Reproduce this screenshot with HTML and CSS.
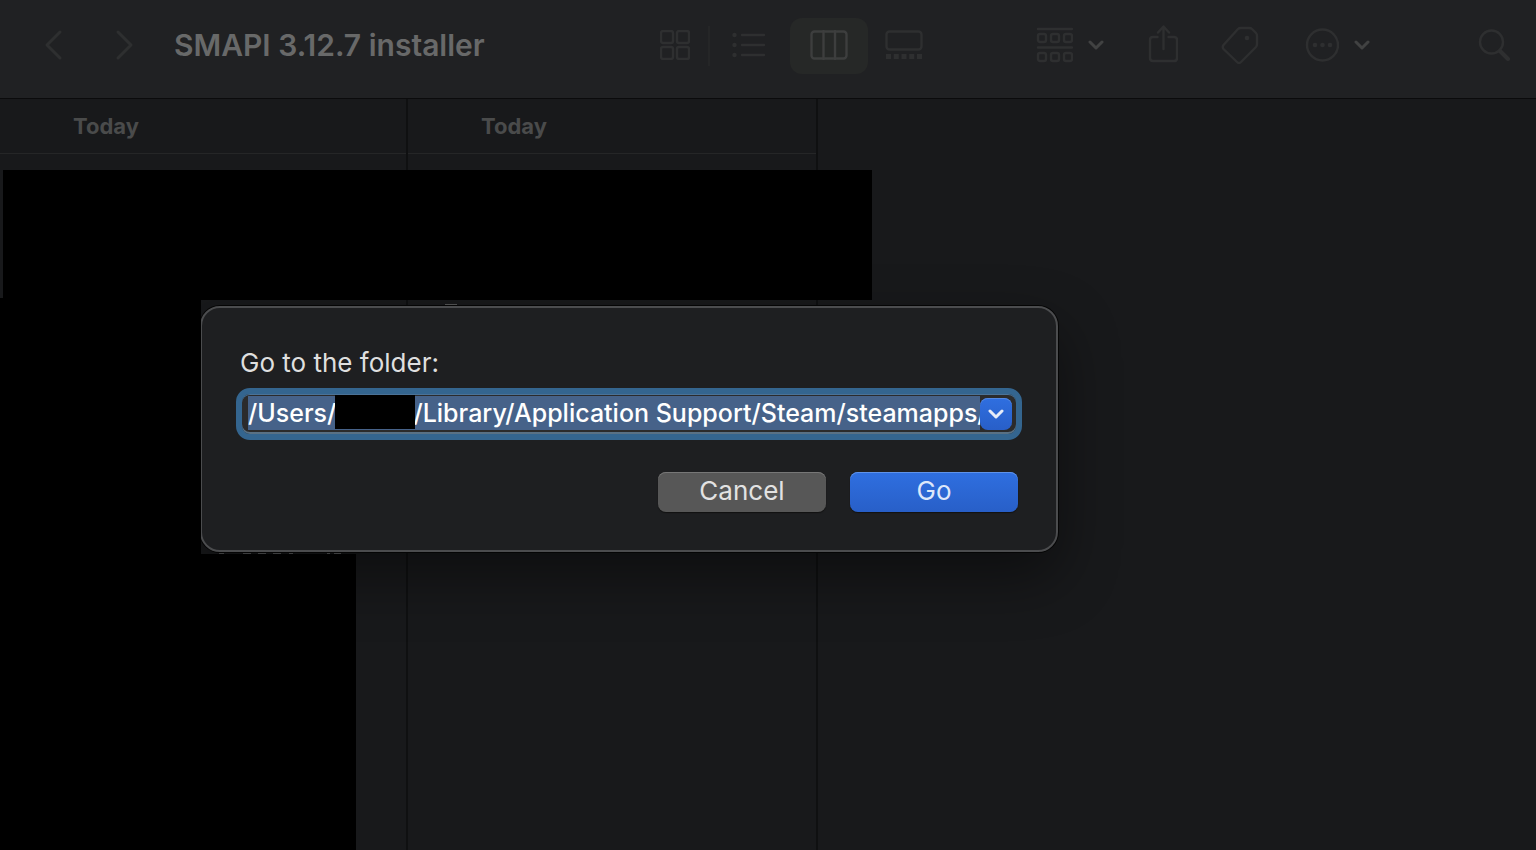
FILE: index.html
```html
<!DOCTYPE html>
<html lang="en">
<head>
<meta charset="utf-8">
<title>SMAPI 3.12.7 installer</title>
<link rel="stylesheet" href="styles.css">
</head>
<body>
<div class="window">
  <header class="toolbar">
    <div class="lead">
      <button class="nav" aria-label="Back"><svg width="20" height="32" viewBox="0 0 20 32"><path d="M17 3 4 16l13 13"/></svg></button>
      <button class="nav" aria-label="Forward"><svg width="20" height="32" viewBox="0 0 20 32"><path d="m3 3 13 13L3 29"/></svg></button>
      <h1 class="title">SMAPI 3.12.7 installer</h1>
    </div>
    <div class="views">
      <button class="view view-icons" aria-label="Icon view"><svg width="30" height="30" viewBox="0 0 30 30"><rect x="1" y="1" width="12" height="12" rx="2"/><rect x="17" y="1" width="12" height="12" rx="2"/><rect x="1" y="17" width="12" height="12" rx="2"/><rect x="17" y="17" width="12" height="12" rx="2"/></svg></button>
      <span class="separator"></span>
      <button class="view" aria-label="List view"><svg width="34" height="28" viewBox="0 0 34 28"><path d="M10 4h22M10 14h22M10 24h22"/><g class="solid"><circle cx="2.500" cy="4" r="2.2"/><circle cx="2.500" cy="14" r="2.2"/><circle cx="2.500" cy="24" r="2.2"/></g></svg></button>
      <button class="view view-current" aria-label="Column view" aria-pressed="true"><svg width="38" height="30" viewBox="0 0 38 30"><rect x="1.500" y="1.500" width="35" height="27" rx="3"/><path d="M13.500 1v28M25 1v28"/></svg></button>
      <button class="view view-gallery" aria-label="Gallery view"><svg width="38" height="30" viewBox="0 0 38 30"><rect x="1.500" y="1.500" width="35" height="18" rx="3"/><path class="dash" d="M1 26.500h36"/></svg></button>
    </div>
    <div class="actions">
      <button class="action" aria-label="Group items"><svg width="37" height="36" viewBox="0 0 37 36"><path d="M2 2h34M2 20.500h34"/><rect x="2" y="7" width="8" height="8" rx="2"/><rect x="15" y="7" width="8" height="8" rx="2"/><rect x="28" y="7" width="8" height="8" rx="2"/><rect x="2" y="26" width="8" height="8" rx="2"/><rect x="15" y="26" width="8" height="8" rx="2"/><rect x="28" y="26" width="8" height="8" rx="2"/></svg><svg class="chevron" width="16" height="12" viewBox="0 0 16 12"><path d="m2 3 6 6 6-6"/></svg></button>
      <button class="action" aria-label="Share"><svg width="31" height="42" viewBox="0 0 31 42"><path d="M10.500 13H6q-3 0-3 3v18q0 3 3 3h21q3 0 3-3V16q0-3-3-3h-5.500M16.500 25V3M11 8.500l5.500-6 5.500 6"/></svg></button>
      <button class="action" aria-label="Tags"><svg width="38" height="38" viewBox="0 0 38 38"><path d="M20 2h8q2 0 3 1l4 4q1 1 1 3v8q0 2-1 3L20 36q-2 2-4 0L2.500 23q-1.500-2 0-4L17 3q1-1 3-1Z"/><circle class="solid" cx="26" cy="12" r="2.300"/></svg></button>
      <button class="action action-more" aria-label="More"><svg width="34" height="34" viewBox="0 0 34 34"><circle cx="17.500" cy="17" r="15.500"/><g class="solid"><circle cx="10" cy="17" r="2.300"/><circle cx="17.500" cy="17" r="2.300"/><circle cx="25" cy="17" r="2.300"/></g></svg><svg class="chevron" width="16" height="12" viewBox="0 0 16 12"><path d="m2 3 6 6 6-6"/></svg></button>
      <button class="action action-search" aria-label="Search"><svg width="32" height="32" viewBox="0 0 32 32"><circle cx="13.500" cy="13" r="11.500"/><path class="handle" d="m22 22 8 8"/></svg></button>
    </div>
  </header>

  <main class="columns">
    <section class="column"><h2 class="column-head">Today</h2></section>
    <section class="column column-wide"><h2 class="column-head">Today</h2></section>
    <section class="preview"></section>
  </main>

  <span class="sliver sliver-top"></span>
  <span class="sliver sliver-bottom"></span>

  <form class="dialog" role="dialog" aria-label="Go to the folder">
    <label class="dialog-label" for="path">Go to the folder:</label>
    <div class="combo">
      <input class="path" id="path" type="text" spellcheck="false" value="/Users/&#8195;&#8195;&#8195;&#8202;/Library/Application Support/Steam/steamapps/common">
      <span class="mask"></span>
      <button class="drop" type="button" aria-label="Recent folders"><svg width="16" height="12" viewBox="0 0 16 12"><path d="m2 3 6 6 6-6"/></svg></button>
    </div>
    <div class="buttons">
      <button class="button" type="button">Cancel</button>
      <button class="button button-default" type="button">Go</button>
    </div>
  </form>

  <div class="redaction redaction-top"></div>
  <div class="redaction redaction-side"></div>
  <div class="redaction redaction-bottom"></div>
</div>
</body>
</html>
```
FILE: styles.css
```css
* { box-sizing: border-box; }

body {
  margin: 0;
  background: #18191b;
  font-family: Inter, "Liberation Sans", sans-serif;
}

button {
  padding: 0;
  border: 0;
  background: none;
  font: inherit;
  color: inherit;
}

svg {
  display: block;
  fill: none;
  stroke: currentColor;
  stroke-width: 2.4;
  stroke-linecap: round;
  stroke-linejoin: round;
}

.solid { fill: currentColor; stroke: none; }

.window {
  position: relative;
  display: flex;
  flex-direction: column;
  min-height: 100vh;
  overflow: hidden;
}

/* Toolbar */
.toolbar {
  display: flex;
  align-items: center;
  padding: 18px 26px 24px 0;
  background: #202123;
  border-bottom: 1px solid #0b0b0c;
  color: #2e2f30;
}

.lead {
  display: flex;
  align-items: center;
  flex: 0 0 642px;
  padding: 0 0 2px 43px;
}

.nav { margin-right: 52px; }
.nav + .nav { margin-right: 39px; }
.nav svg { stroke-width: 3; }

.title {
  margin: 0;
  font-size: 30px;
  line-height: 36px;
  font-weight: 600;
  color: #686969;
  white-space: nowrap;
}

.views { display: flex; align-items: center; }

.view {
  display: flex;
  align-items: center;
  justify-content: center;
  width: 78px;
  height: 56px;
  padding-bottom: 2px;
  border-radius: 12px;
}

.view-icons { width: 66px; }
.view-gallery { width: 72px; }

.view-current {
  margin-left: 2px;
  background: #262827;
  color: #3d3e3e;
}

.dash {
  stroke-width: 5;
  stroke-linecap: butt;
  stroke-dasharray: 5 2.75;
}

.separator { width: 2px; height: 40px; background: #252627; }

.actions {
  display: flex;
  align-items: center;
  gap: 43px;
  margin-left: auto;
  padding-bottom: 2px;
}

.action { display: flex; align-items: center; gap: 15px; }
.action-more { margin-left: 3px; }
.action-search { margin-left: 65px; }
.chevron { color: #414242; stroke-width: 3; }
.handle { stroke-width: 4; }

/* Columns */
.columns { display: flex; flex: 1; }

.column {
  flex: 0 0 408px;
  border-right: 2px solid #0f1011;
}

.column-wide { flex-basis: 410px; }
.preview { flex: 1; }

.column-head {
  margin: 0;
  padding: 11px 73px;
  border-bottom: 1px solid #252627;
  font-size: 22px;
  line-height: 32px;
  font-weight: 700;
  color: #4a4b4b;
}

/* Edges of file rows left visible around the dialog */
.sliver { position: absolute; height: 1px; }

.sliver-top { top: 304px; left: 445px; width: 12px; background: #555656; }

.sliver-bottom {
  z-index: 1;
  top: 553px;
  left: 219px;
  width: 122px;
  background: linear-gradient(90deg,
    #3c3d3e 0 5px, transparent 5px 24px,
    #3c3d3e 24px 32px, transparent 32px 39px,
    #3c3d3e 39px 47px, transparent 47px 54px,
    #3c3d3e 54px 62px, transparent 62px 70px,
    #3c3d3e 70px 74px, transparent 74px 108px,
    #3c3d3e 108px 111px, transparent 111px 115px,
    #3c3d3e 115px);
}

/* Dialog */
.dialog {
  position: absolute;
  top: 306px;
  left: 200px;
  width: 858px;
  padding: 38px 34px;
  border: 2px solid #4b4c4e;
  border-radius: 20px;
  background: #1e1f21;
  box-shadow: 0 0 0 1px #050505, 0 24px 60px rgba(0, 0, 0, 0.45);
}

.dialog-label {
  display: block;
  padding: 0 4px;
  margin-bottom: 8px;
  font-size: 26px;
  line-height: 34px;
  color: #dfdfdf;
}

.combo {
  position: relative;
  display: flex;
  align-items: flex-start;
  padding: 2px 4px 4px 6px;
  border: 6px solid #34658f;
  border-radius: 14px;
  background: #2b2b2c;
  box-shadow: inset 0 1px 0 #4b7297, inset 0 -2px 0 #597185;
}

.path {
  flex: 1;
  min-width: 0;
  height: 34px;
  padding: 0;
  border: 0;
  outline: 0;
  background: #466289;
  font: 500 25px/34px Inter, "Liberation Sans", sans-serif;
  color: #fff;
}

.mask {
  position: absolute;
  top: 1px;
  left: 93px;
  width: 80px;
  height: 34px;
  background: #000;
}

.drop {
  display: grid;
  place-items: center;
  width: 32px;
  height: 32px;
  margin-top: 2px;
  border-radius: 8px;
  background: linear-gradient(#2f6fe0, #285fc8);
  box-shadow: inset 0 1px 0 #5488e2;
  color: #e6ecf8;
}

.drop svg { stroke-width: 3; }

.buttons {
  display: flex;
  justify-content: flex-end;
  gap: 24px;
  padding: 0 4px;
  margin-top: 32px;
}

.button {
  width: 168px;
  height: 40px;
  padding-bottom: 2px;
  border-radius: 8px;
  background: #575757;
  box-shadow: inset 0 1px 0 #777, 0 1px 1px #111;
  font-size: 26px;
  line-height: 32px;
  color: #e2e2e2;
}

.button-default {
  background: linear-gradient(#2f6fe0, #285fc8);
  box-shadow: inset 0 1px 0 #5f93ea, 0 1px 1px #111;
  color: #dde7fa;
}

/* Blacked-out regions */
.redaction { position: absolute; background: #000; }
.redaction-top { top: 170px; left: 3px; width: 869px; height: 130px; }
.redaction-side { top: 298px; bottom: 0; left: 0; width: 201px; }
.redaction-bottom { top: 554px; bottom: 0; left: 0; width: 356px; }
```
